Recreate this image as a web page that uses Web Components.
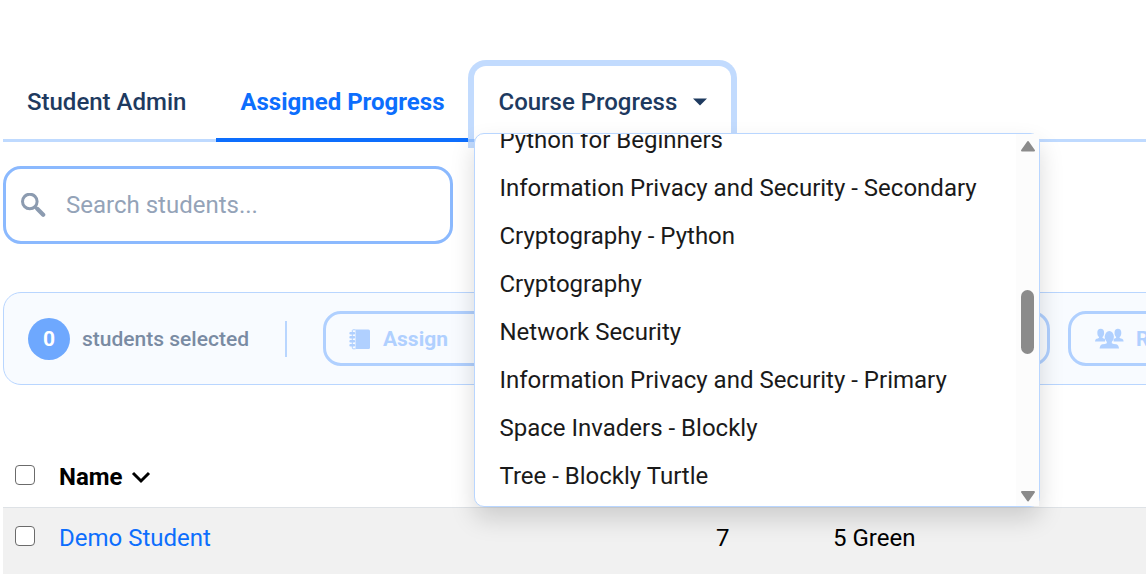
<!DOCTYPE html>
<html lang="en">
<head>
<meta charset="utf-8">
<title>Assigned Progress</title>
<style>
body { margin: 0; background: #fff; }
</style>
</head>
<body>
<progress-page></progress-page>
<script>
const define = (name, html, setup) => {
  const template = document.createElement('template');
  template.innerHTML = '<style>*{box-sizing:border-box}</style>' + html;
  customElements.define(name, class extends HTMLElement {
    constructor() {
      super();
      this.attachShadow({ mode: 'open' }).append(template.content.cloneNode(true));
      if (setup) setup(this, this.shadowRoot);
    }
  });
};

define('nav-tab', `
<style>
:host { display: block; position: relative; margin-bottom: -3px; }
button { display: flex; align-items: center; gap: 16px; font: 500 24px/36px Roboto, sans-serif; color: #1e3a5f; background: none; border: 0; border-bottom: 4px solid transparent; padding: 18px 24px; white-space: nowrap; }
:host([active]) button { color: #0d6efd; border-color: #0d6efd; font-weight: 700; }
:host([open]) button { border-radius: 12px 12px 0 0; box-shadow: 0 0 0 6px rgba(13,110,253,.25); }
svg { display: none; width: 14px; height: 8px; }
:host([menu]) svg { display: block; }
</style>
<button type="button"><slot></slot><svg viewBox="0 0 14 8" aria-hidden="true"><path d="M0 .5h14L7 7.5z" fill="currentColor"/></svg></button>
<slot name="menu"></slot>`);

define('course-menu', `
<style>
:host { position: absolute; z-index: 5; top: 67px; left: 0; width: 566px; height: 374px; display: flex; background: #fff; border: 1px solid #b9d6ff; border-radius: 10px; box-shadow: 0 12px 24px rgba(0,0,0,.15); }
nav { flex: 1; display: flex; flex-direction: column; justify-content: flex-end; overflow: hidden; padding-bottom: 6px; border-radius: 9px 0 0 9px; }
.bar { width: 23px; background: #fcfcfc; display: flex; flex-direction: column; justify-content: space-between; align-items: center; padding: 5px 0 3px; color: #8b8b8b; }
.track { flex: 1; display: flex; flex-direction: column; align-items: center; width: 100%; }
.track::before { content: ""; flex: 138; }
.track::after { content: ""; flex: 136; }
.thumb { width: 13px; height: 64px; border-radius: 7px; background: #8b8b8b; }
svg { width: 16px; height: 13px; display: block; }
</style>
<nav><slot></slot></nav>
<div class="bar" aria-hidden="true">
<svg viewBox="0 0 16 13"><path d="M8 3 14 11.500H2z" fill="currentColor" stroke="currentColor" stroke-width="2" stroke-linejoin="round"/></svg>
<div class="track"><div class="thumb"></div></div>
<svg viewBox="0 0 16 13"><path d="M8 10.500 14 2H2z" fill="currentColor" stroke="currentColor" stroke-width="2" stroke-linejoin="round"/></svg>
</div>`);

define('course-item', `
<style>
:host { display: block; flex: none; }
a { display: block; padding: 6px 24px; font: 400 24px/36px Roboto, sans-serif; color: #1a1a1a; text-decoration: none; white-space: nowrap; }
</style>
<a href="#"><slot></slot></a>`);

define('student-search', `
<style>
:host { display: block; width: 450px; max-width: 100%; }
label { display: flex; align-items: center; gap: 20px; height: 78px; padding: 0 15px; border: 3px solid #8bb9fe; border-radius: 18px; color: #8c9bb0; }
svg { width: 25px; height: 25px; flex: none; }
input { flex: 1; min-width: 0; border: 0; outline: 0; padding: 0; background: none; font: 400 24px/36px Roboto, sans-serif; color: #1e3a5f; }
input::placeholder { color: #94a3b8; opacity: 1; }
</style>
<label><svg viewBox="0 0 25 25" fill="none" stroke="currentColor" aria-hidden="true"><circle cx="8.800" cy="8.500" r="7.300" stroke-width="3"/><path d="m14 14 2.500 2" stroke-width="3"/><path d="m16.500 16 5.700 5.700" stroke-width="4.200" stroke-linecap="round"/></svg>
<input type="text" placeholder="Search students..." aria-label="Search students"></label>`);

define('action-button', `
<style>
:host { display: block; flex: none; }
:host([wide]) { width: 727px; }
button { width: 100%; height: 55px; display: flex; align-items: center; gap: 12px; padding: 0 23px; border: 3px solid #b0d0ff; border-radius: 18px; background: none; color: #b0d0ff; font: 700 21px/32px Roboto, sans-serif; white-space: nowrap; }
</style>
<button type="button" disabled><slot name="icon"></slot><slot></slot></button>`);

define('selection-bar', `
<style>
:host { display: flex; align-items: center; height: 93px; margin-right: -48px; padding-left: 24px; border: 1px solid #b9d6ff; border-radius: 18px; background: #f8fbff; font: 500 21px/32px Roboto, sans-serif; color: #7a8ba3; overflow: hidden; }
.count { width: 42px; height: 42px; margin-right: 12px; border-radius: 50%; background: #6ea8fe; color: #fff; font-weight: 700; line-height: 42px; text-align: center; flex: none; }
.label { white-space: nowrap; }
.rule { width: 2px; height: 36px; background: #b9d6ff; margin: 0 36px; flex: none; }
.actions { display: flex; gap: 18px; }
.book { width: 22px; height: 22px; }
.people { width: 30px; height: 22px; }
</style>
<span class="count">0</span><span class="label">students selected</span><span class="rule"></span>
<div class="actions">
<action-button wide><svg slot="icon" class="book" viewBox="0 0 22 22" fill="currentColor" aria-hidden="true"><path d="M6.500 1.500H19.500a1.500 1.500 0 0 1 1.500 1.500v16.500a1.500 1.500 0 0 1-1.500 1.500H6.500z"/><path d="M6.500 1.800H4q-.7 0-.7.800v17.400q0 .8.7.8h2.500" fill="none" stroke="currentColor" stroke-width="1"/><path d="M1.500 5.200h3.500M1.500 9.200h3.500M1.500 13.200h3.500M1.500 17.200h3.500" fill="none" stroke="currentColor" stroke-width="2.400" stroke-linecap="round"/></svg>Assign</action-button>
<action-button><svg slot="icon" class="people" viewBox="0 0 30 22" fill="currentColor" aria-hidden="true"><ellipse cx="15.300" cy="8.800" rx="4.600" ry="5.800"/><path d="M12.800 13h5v2.200q1.500.9 4.500 1.100 2.500.7 2.700 4.200H5.600q.2-3.500 2.700-4.200 3-.2 4.500-1.100z"/><ellipse cx="6.700" cy="5" rx="3.400" ry="4.200"/><path d="M5 8h3.500v1.700q1 .8 2.500 1v2.800H1q0-2.200 1.500-2.700Q4 10.600 5 9.700z"/><ellipse cx="23.900" cy="5" rx="3.400" ry="4.200"/><path d="M25.600 8h-3.500v1.700q-1 .8-2.500 1v2.800h10q0-2.200-1.500-2.700-1.500-.2-2.500-1.100z"/></svg>R</action-button>
</div>`);

define('student-table', `
<style>
:host { display: block; font: 400 24px/36px Roboto, sans-serif; color: #000; }
table { width: 100%; border-collapse: separate; border-spacing: 0; table-layout: fixed; }
th, td { padding: 12px; text-align: left; vertical-align: top; font-weight: 400; white-space: nowrap; }
th { height: 61px; border-bottom: 1px solid #dee2e6; }
td { height: 72px; background: #f1f1f1; }
.check { width: 44px; }
.level { width: 117px; }
.grade { width: 325px; }
.sort { display: flex; align-items: center; gap: 8px; border: 0; padding: 0; background: none; color: inherit; font: 700 24px/36px Roboto, sans-serif; }
.sort svg { width: 20px; height: 14px; }
a { color: #0d6efd; text-decoration: none; }
input { appearance: none; display: block; width: 20px; height: 20px; margin: 6px 0 0; border: 1px solid #6b6b6b; border-radius: 4px; background: #fff; }
</style>
<table>
<thead><tr><th class="check"><input type="checkbox" aria-label="Select all students"></th>
<th><button class="sort" type="button">Name<svg viewBox="0 0 20 14" fill="none" stroke="currentColor" stroke-width="3" aria-hidden="true"><path d="m2 3 8 8 8-8"/></svg></button></th><th class="level"></th><th class="grade"></th></tr></thead>
<tbody><tr><td><input type="checkbox" aria-label="Select Demo Student"></td><td><a href="#">Demo Student</a></td><td>7</td><td>5 Green</td></tr></tbody>
</table>`);

define('progress-page', `
<style>
:host { display: block; overflow: hidden; max-height: 100vh; padding: 66px 0 0 3px; box-sizing: border-box; }
.tabs { display: flex; gap: 6px; border-bottom: 3px solid #bfdaff; margin-bottom: 24px; }
student-search { margin-bottom: 48px; }
selection-bar { margin-bottom: 62px; }
</style>
<div class="tabs">
<nav-tab>Student Admin</nav-tab>
<nav-tab active>Assigned Progress</nav-tab>
<nav-tab menu open>Course Progress
<course-menu slot="menu">
<course-item>Python for Beginners</course-item>
<course-item>Information Privacy and Security - Secondary</course-item>
<course-item>Cryptography - Python</course-item>
<course-item>Cryptography</course-item>
<course-item>Network Security</course-item>
<course-item>Information Privacy and Security - Primary</course-item>
<course-item>Space Invaders - Blockly</course-item>
<course-item>Tree - Blockly Turtle</course-item>
</course-menu></nav-tab>
</div>
<student-search></student-search>
<selection-bar></selection-bar>
<student-table></student-table>`);
</script>
</body>
</html>
